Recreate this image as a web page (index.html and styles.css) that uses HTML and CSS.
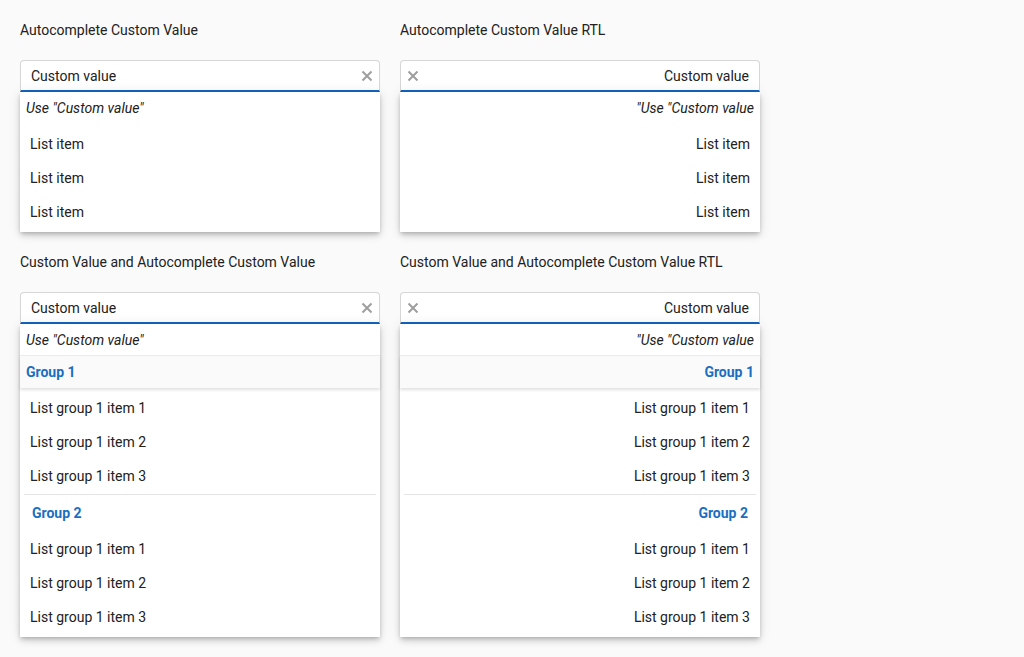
FILE: index.html
```html
<!DOCTYPE html>
<html>
<head>
<meta charset="utf-8">
<link rel="stylesheet" href="styles.css">
</head>
<body>
<div class="grid">
  <section class="demo">
    <div class="title">Autocomplete Custom Value</div>
    <div class="combo">
      <div class="input"><span class="value">Custom value</span><span class="clear"><svg viewBox="0 0 12 12" width="12" height="12"><path d="M1.5 1.5 L10.5 10.5 M10.5 1.5 L1.5 10.5" stroke="#9e9e9e" stroke-width="2"/></svg></span></div>
      <div class="popup">
        <div class="custom">Use "Custom value"</div>
        <ul class="list">
          <li class="item">List item</li>
          <li class="item">List item</li>
          <li class="item">List item</li>
        </ul>
      </div>
    </div>
  </section>
  <section class="demo" dir="rtl">
    <div class="title" dir="ltr">Autocomplete Custom Value RTL</div>
    <div class="combo">
      <div class="input"><span class="value">Custom value</span><span class="clear"><svg viewBox="0 0 12 12" width="12" height="12"><path d="M1.5 1.5 L10.5 10.5 M10.5 1.5 L1.5 10.5" stroke="#9e9e9e" stroke-width="2"/></svg></span></div>
      <div class="popup">
        <div class="custom">Use "Custom value"</div>
        <ul class="list">
          <li class="item">List item</li>
          <li class="item">List item</li>
          <li class="item">List item</li>
        </ul>
      </div>
    </div>
  </section>
  <section class="demo">
    <div class="title">Custom Value and Autocomplete Custom Value</div>
    <div class="combo">
      <div class="input"><span class="value">Custom value</span><span class="clear"><svg viewBox="0 0 12 12" width="12" height="12"><path d="M1.5 1.5 L10.5 10.5 M10.5 1.5 L1.5 10.5" stroke="#9e9e9e" stroke-width="2"/></svg></span></div>
      <div class="popup">
        <div class="custom bordered">Use "Custom value"</div>
        <div class="group-header">Group 1</div>
        <ul class="list">
          <li class="item">List group 1 item 1</li>
          <li class="item">List group 1 item 2</li>
          <li class="item">List group 1 item 3</li>
          <li class="group-label">Group 2</li>
          <li class="item">List group 1 item 1</li>
          <li class="item">List group 1 item 2</li>
          <li class="item">List group 1 item 3</li>
        </ul>
      </div>
    </div>
  </section>
  <section class="demo" dir="rtl">
    <div class="title" dir="ltr">Custom Value and Autocomplete Custom Value RTL</div>
    <div class="combo">
      <div class="input"><span class="value">Custom value</span><span class="clear"><svg viewBox="0 0 12 12" width="12" height="12"><path d="M1.5 1.5 L10.5 10.5 M10.5 1.5 L1.5 10.5" stroke="#9e9e9e" stroke-width="2"/></svg></span></div>
      <div class="popup">
        <div class="custom bordered">Use "Custom value"</div>
        <div class="group-header">Group 1</div>
        <ul class="list">
          <li class="item">List group 1 item 1</li>
          <li class="item">List group 1 item 2</li>
          <li class="item">List group 1 item 3</li>
          <li class="group-label">Group 2</li>
          <li class="item">List group 1 item 1</li>
          <li class="item">List group 1 item 2</li>
          <li class="item">List group 1 item 3</li>
        </ul>
      </div>
    </div>
  </section>
</div>
</body>
</html>
```

FILE: styles.css
```css
html, body {
  margin: 0;
  padding: 0;
  background: #fafafa;
}
body {
  font-family: Roboto, "Liberation Sans", sans-serif;
  font-size: 14px;
  color: #212121;
  padding: 20px;
}
.grid {
  display: grid;
  grid-template-columns: 360px 360px;
  column-gap: 20px;
  row-gap: 20px;
  align-items: start;
}
.demo {
  display: flex;
  flex-direction: column;
  gap: 20px;
}
.demo[dir="rtl"] .title {
  text-align: left;
}
.title {
  line-height: 20px;
  height: 20px;
}
.combo {
  display: flex;
  flex-direction: column;
}
.input {
  box-sizing: border-box;
  height: 32px;
  display: flex;
  align-items: center;
  justify-content: space-between;
  background: #fff;
  border: 1px solid #d6d6d6;
  border-bottom: 2px solid #1565c0;
  border-radius: 4px 4px 0 0;
  padding: 0 6px 0 10px;
}
.demo[dir="rtl"] .input {
  padding: 0 10px 0 6px;
}
.value {
  line-height: 20px;
  padding-top: 1px;
}
.clear {
  display: flex;
  width: 12px;
  height: 12px;
  margin-top: 1px;
}
.popup {
  background: #fff;
  box-shadow: 0 2px 4px -1px rgba(0,0,0,.2), 0 4px 6px 0 rgba(0,0,0,.12), 0 1px 12px 0 rgba(0,0,0,.1);
}
.custom {
  height: 32px;
  line-height: 32px;
  padding: 0 6px;
  font-style: italic;
  box-sizing: border-box;
}
.custom.bordered {
  border-bottom: 1px solid #ececec;
  line-height: 32px;
}
.group-header {
  height: 32px;
  line-height: 32px;
  padding: 0 6px;
  font-weight: 700;
  color: #1a6ec1;
  background: #fafafa;
  box-shadow: 0 2px 3px rgba(0,0,0,.12);
  position: relative;
}
.list {
  list-style: none;
  margin: 0;
  padding: 3px 0;
}
.item {
  height: 34px;
  line-height: 34px;
  padding: 0 10px;
}
.group-label {
  height: 37px;
  line-height: 37px;
  margin: 1px 4px 0;
  padding: 0 8px;
  border-top: 1px solid #e4e4e4;
  font-weight: 700;
  color: #1a6ec1;
}
```
